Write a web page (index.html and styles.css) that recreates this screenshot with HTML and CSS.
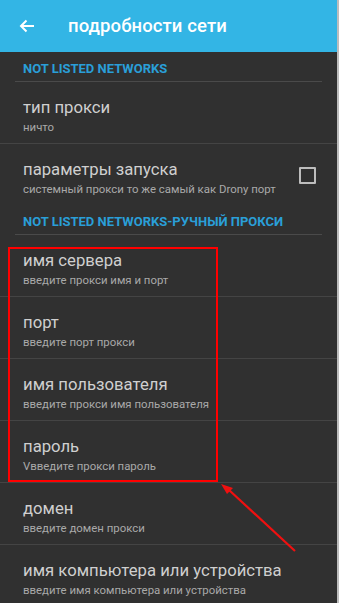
FILE: index.html
```
<!DOCTYPE html>
<html lang="ru">
<head>
<meta charset="utf-8">
<link rel="stylesheet" href="styles.css">
</head>
<body>
<div class="screen">
  <header class="appbar">
    <svg class="back" width="16" height="14" viewBox="0 0 16 14"><path d="M15 7H2M7.5 1.5L2 7l5.5 5.5" fill="none" stroke="#fff" stroke-width="2"/></svg>
    <h1 class="title">подробности сети</h1>
  </header>
  <div class="category">NOT LISTED NETWORKS</div>
  <div class="row">
    <div class="texts"><div class="rtitle">тип прокси</div><div class="rsub">ничто</div></div>
  </div>
  <div class="row row-last">
    <div class="texts"><div class="rtitle">параметры запуска</div><div class="rsub">системный прокси то же самый как Drony порт</div></div>
    <span class="checkbox"></span>
  </div>
  <div class="category">NOT LISTED NETWORKS-РУЧНЫЙ ПРОКСИ</div>
  <div class="row">
    <div class="texts"><div class="rtitle">имя сервера</div><div class="rsub">введите прокси имя и порт</div></div>
  </div>
  <div class="row">
    <div class="texts"><div class="rtitle">порт</div><div class="rsub">введите порт прокси</div></div>
  </div>
  <div class="row">
    <div class="texts"><div class="rtitle">имя пользователя</div><div class="rsub">введите прокси имя пользователя</div></div>
  </div>
  <div class="row">
    <div class="texts"><div class="rtitle">пароль</div><div class="rsub">Vвведите прокси пароль</div></div>
  </div>
  <div class="row">
    <div class="texts"><div class="rtitle">домен</div><div class="rsub">введите домен прокси</div></div>
  </div>
  <div class="row">
    <div class="texts"><div class="rtitle">имя компьютера или устройства</div><div class="rsub">введите имя компьютера или устройства</div></div>
  </div>
  <div class="highlight"></div>
  <svg class="pointer" width="339" height="603" viewBox="0 0 339 603">
    <line x1="295" y1="551" x2="229" y2="490" stroke="#f01010" stroke-width="2.2"/>
    <path d="M221 484 L233 488 L227 494 Z" fill="#f01010"/>
  </svg>
</div>
</body>
</html>
```
FILE: styles.css
```
html, body {
  margin: 0;
  padding: 0;
  background: #303030;
}
body {
  font-family: Roboto, "Noto Sans", sans-serif;
  overflow: hidden;
}
.screen {
  position: relative;
  width: 337px;
  height: 603px;
  border-right: 2px solid #bdbdbd;
  background: #303030;
  overflow: hidden;
}
.appbar {
  height: 52px;
  background: #33b5e5;
  display: flex;
  align-items: center;
  padding-left: 19px;
  box-sizing: border-box;
}
.back {
  display: block;
  margin-top: -1px;
}
.title {
  margin: 0 0 0 33px;
  font-size: 18.5px;
  font-weight: 500;
  color: #fff;
  letter-spacing: 0.1px;
}
.category {
  margin: 0 15px 0 15px;
  padding: 9px 0 5px 8px;
  font-size: 13px;
  line-height: 15px;
  font-weight: 700;
  color: #2a9fd8;
  border-bottom: 1px solid #4a4a4a;
}
.row {
  display: flex;
  align-items: center;
  padding: 16px 23px 9px 23px;
  border-bottom: 1px solid #444;
}
.row-last {
  border-bottom: none;
}
.texts {
  flex: 1;
}
.rtitle {
  font-size: 16.7px;
  line-height: 20px;
  color: #cfcfcf;
}
.rsub {
  margin-top: 2px;
  font-size: 11.4px;
  line-height: 14px;
  color: #a9a9a9;
}
.checkbox {
  width: 13px;
  height: 13px;
  border: 2px solid #bdbdbd;
  border-radius: 1px;
  margin-right: -2px;
  margin-top: -6px;
}
.highlight {
  position: absolute;
  left: 8px;
  top: 247px;
  width: 206px;
  height: 231px;
  border: 2px solid #f00;
}
.pointer {
  position: absolute;
  left: 0;
  top: 0;
}
```
